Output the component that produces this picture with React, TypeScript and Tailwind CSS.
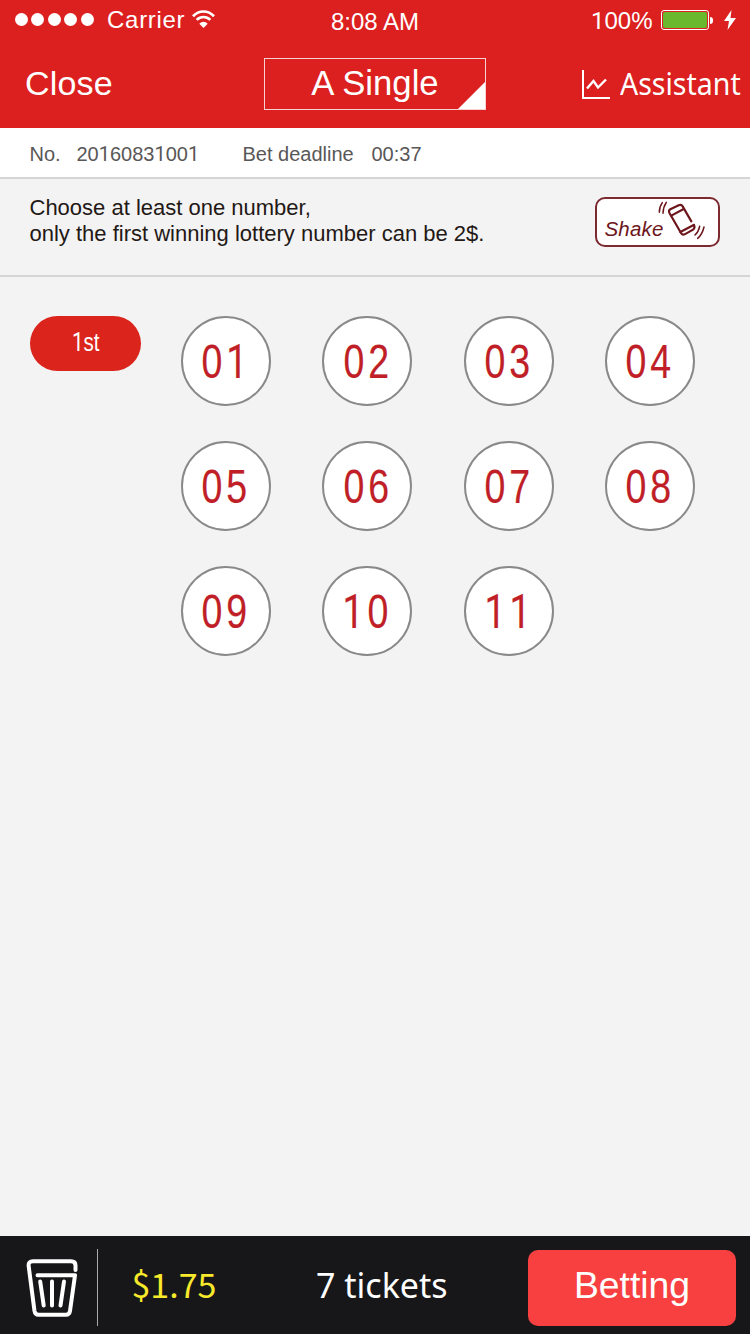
const numbers = ["01", "02", "03", "04", "05", "06", "07", "08", "09", "10", "11"];

// Sets every "1" in a face whose numeral has no foot.
function Digits({ value }: { value: string }) {
  return (
    <>
      {value.split(/(1)/).map((part, index) =>
        part === "1" ? (
          <span key={index} className="font-['Roboto',sans-serif] leading-[0]">1</span>
        ) : (
          part
        ),
      )}
    </>
  );
}

function WifiIcon() {
  return (
    <svg className="h-[18px] w-[23px]" viewBox="0 0 23 18" fill="none" stroke="white" strokeWidth="2.7">
      <path d="M1 6.2C7-.1 16-.1 22 6.2" />
      <path d="M4.700 9.900c4-3.900 9.600-3.900 13.600 0" />
      <path d="M7.300 13.700c2.400-2.700 6-2.700 8.400 0L11.500 17.900z" fill="white" stroke="none" />
    </svg>
  );
}

function ChartIcon() {
  return (
    <svg className="h-[30px] w-7" viewBox="0 0 28 30" fill="none" stroke="white">
      <path d="M1 0v28h27" strokeWidth="2" />
      <path d="M5 18.500l6.500-7.500 4.500 6.500L24 9.500" strokeWidth="2.400" />
    </svg>
  );
}

function ShakeIcon() {
  return (
    <svg className="h-10 w-12" viewBox="264 90 144 120" fill="none" stroke="#6d161c" strokeWidth="6.5" strokeLinecap="round">
      <path d="M364 154L338 109Q334 102 326 106L301 118Q295 121 298 128L333 189Q337 196 344 193L369 179Q376 174 372 165" />
      <path d="M304 137L341 117M331 186L371 165" />
      <path d="M277 98Q268 110 268 127M289 97Q279 112 279 130" strokeWidth="4.5" />
      <path d="M389 169Q386 185 375 195M402 171Q397 193 383 205" strokeWidth="4.5" />
    </svg>
  );
}

function TrashIcon() {
  return (
    <svg className="h-[60px] w-[54px]" viewBox="25 38 54 60" fill="none" stroke="white" strokeWidth="4" strokeLinecap="round" strokeLinejoin="round">
      <path d="M75.5 50v-4.500q0-4.200-4.500-4.200H33q-5 0-4.300 5L34.500 91q.6 3.800 4 3.800H66q3.400 0 4-3.800l5-35.800H37.500" />
      <path d="M40.200 61.500l3.500 24M52 61.500v24M64 61.500l-3.500 24" />
    </svg>
  );
}

export default function App() {
  return (
    <div className="flex h-[1334px] w-[750px] flex-col overflow-hidden bg-[#f3f3f3] font-['Liberation_Sans',Arial,sans-serif] whitespace-nowrap">
      <header className="h-32 bg-[#dc1f1f] text-white">
        <div className="flex h-10 items-start text-2xl leading-none">
          <div className="flex w-[331px] pl-[15px]">
            <div className="mt-[13px] flex gap-[3.4px]">
              {[0, 1, 2, 3, 4].map((dot) => (
                <span key={dot} className="size-[13px] rounded-full bg-white" />
              ))}
            </div>
            <span className="mt-2 ml-[13.5px] tracking-[0.7px]">Carrier</span>
            <span className="mt-[10px] ml-[6.500px]"><WifiIcon /></span>
          </div>
          <span className="mt-[10px] w-[260px]">8:08 AM</span>
          <span className="mt-[9px] w-[70px]"><Digits value="100%" /></span>
          <div className="mt-[10px] flex items-center">
            <div className="h-5 w-12 rounded-[3px] border border-white p-px">
              <div className="h-full rounded-[2px] bg-[#69b82d]" />
            </div>
            <span className="ml-px h-[7px] w-[3px] rounded-r-full bg-white" />
          </div>
          <svg className="mt-[10px] ml-[11px] h-5 w-3" viewBox="0 0 12 20" fill="white">
            <path d="M7.500 0L0 11h5L3.500 20 12 8H6.500z" />
          </svg>
        </div>
        <div className="flex h-[88px] items-start text-[34px] leading-none">
          <span className="mt-[26px] w-[239px] pl-[25px] tracking-[0.2px]">Close</span>
          <button className="relative mt-[18px] ml-[25px] flex h-[52px] w-[222px] justify-center border border-white/80 pt-[7px] text-[34.7px] leading-none">
            A Single
            <svg className="absolute right-0 bottom-0 size-[27px]" viewBox="0 0 27 27" fill="white">
              <path d="M27 0v27H0z" />
            </svg>
          </button>
          <span className="mt-[30px] ml-24"><ChartIcon /></span>
          <span className="mt-[27px] ml-[10px] origin-left scale-x-[0.95] font-['Noto_Sans',sans-serif] text-[30px] leading-[34px]">Assistant</span>
        </div>
      </header>

      <div className="flex h-[51px] items-start border-b-2 border-[#d5d5d5] bg-white pt-[16px] pl-[29.5px] text-xl leading-none text-[#595757]">
        <span className="w-[47px]">No.</span>
        <span className="w-[166px]"><Digits value="20160831001" /></span>
        <span className="w-[129px]">Bet deadline</span>
        <span>00:37</span>
      </div>

      <section className="flex h-[98px] items-start justify-between border-b-2 border-[#d5d5d5] pr-[30px] pl-[29.5px]">
        <p className="mt-4 text-[22px] leading-[26px] text-[#231815]">
          Choose at least one number,
          <br />
          only the first winning lottery number can be 2$.
        </p>
        <button className="mt-[18px] flex h-[50px] w-[125.5px] items-start rounded-[10px] border-2 border-[#7c2930] bg-white pl-2 text-[#6d161c]">
          <span className="mt-5 w-[53px] text-[20.5px] leading-none tracking-[0.2px] italic">Shake</span>
          <span className="mt-px"><ShakeIcon /></span>
        </button>
      </section>

      <main className="flex flex-1 items-start pt-[39px] pl-[30px]">
        <div className="flex h-[55px] w-[111px] items-start justify-center rounded-full bg-[#db251c] pt-[14px] text-white">
          <span className="scale-x-[0.82] text-[25px] leading-none"><Digits value="1st" /></span>
        </div>
        <div className="ml-10 grid grid-cols-[repeat(4,90px)] gap-x-[51.3px] gap-y-[35px]">
          {numbers.map((number) => (
            <button key={number} className="flex size-[90px] items-start justify-center rounded-full border-2 border-[#898989] bg-white pt-[20px] pl-px text-[#c01f27]">
              <span className="scale-x-[0.79] text-[47.5px] leading-none tracking-[4.800px] [-webkit-text-stroke:0.2px_#c01f27]"><Digits value={number} /></span>
            </button>
          ))}
        </div>
      </main>

      <footer className="flex h-[98px] items-start bg-[#171719] text-white">
        <button className="mt-[22px] ml-[25px]"><TrashIcon /></button>
        <span className="mt-[13px] ml-[18px] h-[77px] w-px bg-[#aaa]" />
        <span className="mt-[23px] ml-[33.5px] w-[184.5px] font-['Noto_Sans_CJK_SC',sans-serif] text-[34px] leading-[50px] text-[#f8e92b]">$1.75</span>
        <span className="mt-[24px] w-[212px] font-['Noto_Sans',sans-serif] text-[34px] leading-[50px]">7 tickets</span>
        <button className="mt-[14px] h-[76px] w-[208px] rounded-[10px] bg-[#f84040] pt-[17px] text-[37.3px] leading-none">
          <span className="block h-[59px]">Betting</span>
        </button>
      </footer>
    </div>
  );
}
